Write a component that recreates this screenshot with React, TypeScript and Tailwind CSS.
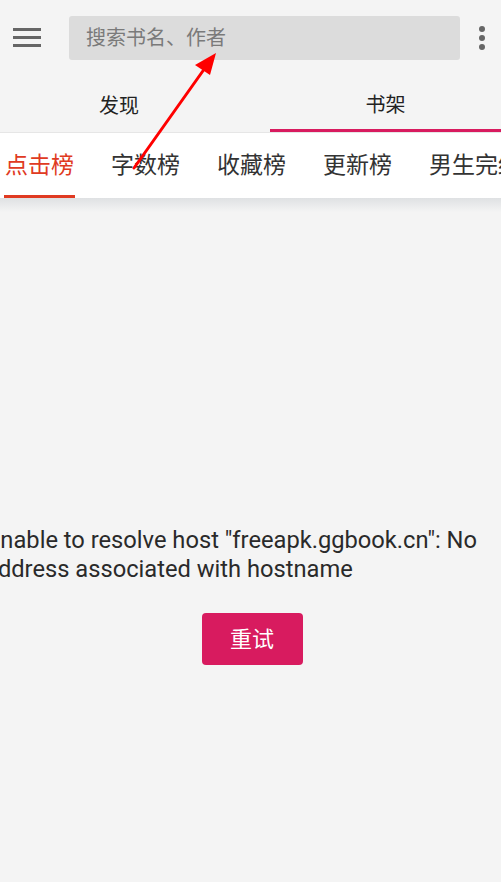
export default function App() {
  const ranks = ['点击榜', '字数榜', '收藏榜', '更新榜', '男生完结榜'];

  return (
    <div
      className="relative w-[501px] h-[882px] overflow-hidden bg-[#f4f4f4]"
      style={{ fontFamily: 'Roboto, "Noto Sans CJK SC", sans-serif' }}
    >
      {/* Toolbar */}
      <div className="flex items-center h-[74px] pt-[1px]">
        <div className="w-[69px] flex justify-start pl-[13px]">
          <div className="flex flex-col gap-[5px]">
            <div className="w-[28px] h-[3px] bg-[#666]" />
            <div className="w-[28px] h-[3px] bg-[#666]" />
            <div className="w-[28px] h-[3px] bg-[#666]" />
          </div>
        </div>
        <div className="w-[391px] h-[44px] bg-[#dcdcdc] rounded-[3px] flex items-center pl-[17px] text-[20px] text-[#7a7a7a]">
          搜索书名、作者
        </div>
        <div className="flex-1 flex flex-col items-center gap-[3px] pl-[3px]">
          <div className="w-[6px] h-[6px] rounded-full bg-[#666]" />
          <div className="w-[6px] h-[6px] rounded-full bg-[#666]" />
          <div className="w-[6px] h-[6px] rounded-full bg-[#666]" />
        </div>
      </div>

      {/* Main tabs */}
      <div className="flex h-[58px] text-[20px] text-[#222]">
        <div className="w-[238px] flex items-center justify-center pt-[6px]">发现</div>
        <div className="w-[32px]" />
        <div className="flex-1 flex flex-col">
          <div className="flex-1 flex items-center justify-center pt-[7px]">书架</div>
          <div className="h-[3px] bg-[#d81b5f]" />
        </div>
      </div>

      {/* Rank tabs */}
      <div className="border-t border-[#e6e6e6] bg-white h-[66px] flex items-stretch whitespace-nowrap text-[23px] text-[#333]">
        {ranks.map((r, i) => (
          <div
            key={r}
            className={
              'shrink-0 flex flex-col ' + (i === 0 ? 'ml-[4px] text-[#e03a22]' : 'ml-[35px]')
            }
          >
            <div className="flex-1 flex items-center pl-[1px] pt-[5px]">{r}</div>
            <div className={'h-[3px] w-[71px] ' + (i === 0 ? 'bg-[#e03a22]' : '')} />
          </div>
        ))}
      </div>
      <div className="h-[14px] bg-gradient-to-b from-[#dfe1e3] to-[#f4f4f4]" />

      {/* Error */}
      <div className="pt-[314px] ml-[-15px] text-[23.7px] leading-[29px] text-[#2a2a2a] whitespace-nowrap">
        <div>Unable to resolve host "freeapk.ggbook.cn": No</div>
        <div>address associated with hostname</div>
      </div>
      <div className="flex justify-center mt-[29px] pl-[3px]">
        <div className="w-[101px] h-[52px] rounded-[4px] bg-[#d81b5f] text-white text-[22px] flex items-center justify-center">
          重试
        </div>
      </div>

      {/* Annotation arrow */}
      <svg className="absolute left-0 top-0 pointer-events-none" width="501" height="882">
        <line x1="134" y1="168" x2="205" y2="68" stroke="#ff0000" strokeWidth="3" strokeLinecap="round" />
        <polygon points="216,53 195,65 210,75" fill="#ff0000" />
      </svg>
    </div>
  );
}
